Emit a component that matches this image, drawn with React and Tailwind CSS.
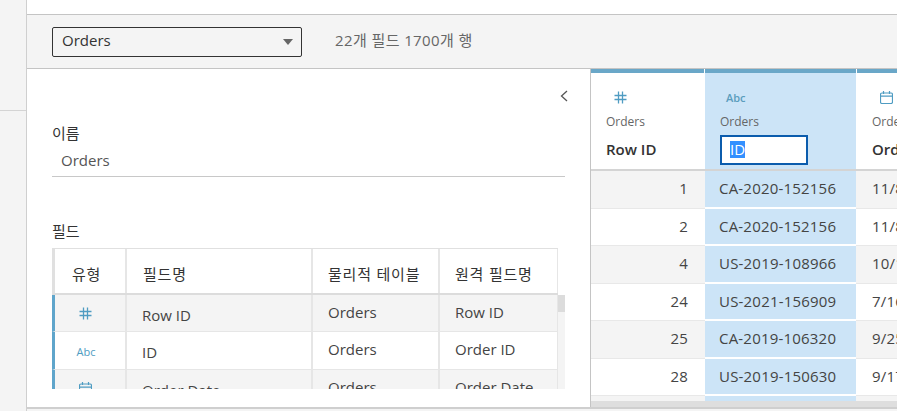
const FONT = "font-['Open_Sans','Noto_Sans_CJK_KR',sans-serif]";

function HashIcon({ className }) {
  return (
    <svg width="13" height="13" viewBox="0 0 13 13" className={className} fill="none" stroke="#4f9cc2" strokeWidth="1.3">
      <path d="M0.5 4.5H12.5M0.5 8.5H12.5M4.5 0.5V12.5M8.5 0.5V12.5" />
    </svg>
  );
}

function CalendarIcon({ className }) {
  return (
    <svg width="13" height="13" viewBox="0 0 13 13" className={className} fill="none" stroke="#4f9cc2" strokeWidth="1.2">
      <rect x="0.5" y="2" width="12" height="10.5" rx="1.5" />
      <path d="M0.5 5.2H12.5M3.5 0V3M9.5 0V3" />
    </svg>
  );
}

const fieldRows = [
  { icon: "hash", name: "Row ID", table: "Orders", remote: "Row ID", shade: true, h: "h-[37px]" },
  { icon: "abc", name: "ID", table: "Orders", remote: "Order ID", shade: false, h: "h-[38px]" },
  { icon: "cal", name: "Order Date", table: "Orders", remote: "Order Date", shade: true, h: "h-[38px]" },
];

const gridRows = [
  { id: "1", order: "CA-2020-152156", date: "11/8/2020" },
  { id: "2", order: "CA-2020-152156", date: "11/8/2020" },
  { id: "4", order: "US-2019-108966", date: "10/11/2019" },
  { id: "24", order: "US-2021-156909", date: "7/16/2021" },
  { id: "25", order: "CA-2019-106320", date: "9/25/2019" },
  { id: "28", order: "US-2019-150630", date: "9/17/2019" },
  { id: "", order: "", date: "" },
];

function FieldsTable() {
  return (
    <div className="flex mt-[7px] h-[141px] overflow-hidden">
      <div className="w-[506px] shrink-0">
        <div className="flex h-[47px] border-t border-[#e0e0e0] border-b-2 border-b-[#dcdcdc] border-l-[3px] border-l-[#e0e0e0] text-[15px] tracking-[0.8px] text-[#333]">
          <div className="w-[72px] shrink-0 border-r-2 border-[#e6e6e6] pl-[17px] pt-[14px]">유형</div>
          <div className="w-[186px] shrink-0 border-r-2 border-[#e6e6e6] pl-[16px] pt-[14px]">필드명</div>
          <div className="w-[127px] shrink-0 border-r-2 border-[#e6e6e6] pl-[15px] pt-[14px]">물리적 테이블</div>
          <div className="w-[118px] shrink-0 border-r border-[#e6e6e6] pl-[15px] pt-[14px]">원격 필드명</div>
        </div>
        {fieldRows.map((r) => (
          <div
            key={r.name}
            className={`flex ${r.h} border-l-[3px] border-l-[#5fa5cb] border-b border-b-[#e6e6e6] text-[15px] text-[#444] ${r.shade ? "bg-[#f4f4f4]" : "bg-white"}`}
          >
            <div className="w-[72px] shrink-0 border-r-2 border-[#e6e6e6] flex items-center justify-center pr-[10px]">
              {r.icon === "hash" && <HashIcon />}
              {r.icon === "abc" && <span className="text-[11px] text-[#4f9cc2] pl-[2px] pt-[3px]">Abc</span>}
              {r.icon === "cal" && <CalendarIcon />}
            </div>
            <div className="w-[186px] shrink-0 border-r-2 border-[#e6e6e6] pl-[15px] pt-[9px]">{r.name}</div>
            <div className="w-[127px] shrink-0 border-r-2 border-[#e6e6e6] pl-[15px] pt-[6px]">{r.table}</div>
            <div className="w-[118px] shrink-0 border-r border-[#e6e6e6] pl-[15px] pt-[6px] whitespace-nowrap">{r.remote}</div>
          </div>
        ))}
      </div>
      <div className="w-[7px] mt-[47px] bg-[#f4f4f4]">
        <div className="h-[17px] bg-[#dcdcdc]" />
      </div>
    </div>
  );
}

function DataGrid() {
  return (
    <div className="flex-1 min-w-0 overflow-hidden border-l border-[#c4c4c4] bg-white flex flex-col">
      <div className="flex h-[102px] shrink-0 border-b-2 border-[#d4d4d4]">
        <div className="w-[113px] shrink-0 border-t-[4px] border-[#6aa7c8] pl-[15px] text-[12px] text-[#666]">
          <HashIcon className="ml-[8px] mt-[18px]" />
          <div className="mt-[9px] leading-[18px]">Orders</div>
          <div className="mt-[8px] text-[15px] font-semibold text-[#333] leading-[20px]">Row ID</div>
        </div>
        <div className="w-[151px] shrink-0 ml-[1px] border-t-[4px] border-[#6aa7c8] bg-[#cce4f7] pl-[15px] text-[12px] text-[#666]">
          <div className="text-[11px] font-semibold text-[#5b9dbd] ml-[6px] mt-[15px] leading-[20px]">Abc</div>
          <div className="mt-[5px] leading-[18px]">Orders</div>
          <div className="mt-[4px] w-[88px] h-[30px] border-[2px] border-[#0b5cad] bg-white pl-[8px] pb-[2px] flex items-center text-[15px] text-[#333]">
            <span className="bg-[#3390ff] text-white leading-[17px]">ID</span>
          </div>
        </div>
        <div className="flex-1 ml-[1px] border-t-[4px] border-[#6aa7c8] pl-[15px] text-[12px] text-[#666] whitespace-nowrap overflow-hidden">
          <CalendarIcon className="ml-[8px] mt-[18px]" />
          <div className="mt-[9px] leading-[18px]">Orders</div>
          <div className="mt-[8px] text-[15px] font-semibold text-[#333] leading-[20px]">Order Date</div>
        </div>
      </div>
      <div className="h-[230px] overflow-hidden shrink-0">
        {gridRows.map((r, i) => (
          <div key={i} className={`flex h-[37.5px] text-[15px] tracking-[0.2px] text-[#444] border-b border-[#e8e8e8] ${i % 2 === 0 ? "bg-[#f4f4f4]" : "bg-white"}`}>
            <div className="w-[113px] shrink-0 text-right pr-[16px] pt-[6px]">{r.id}</div>
            <div className="w-[151px] shrink-0 ml-[1px] bg-[#cce4f7] border-b-2 border-white -mb-px pl-[14px] pt-[6px]">{r.order}</div>
            <div className="flex-1 ml-[1px] pl-[15px] pt-[6px] whitespace-nowrap overflow-hidden">{r.date}</div>
          </div>
        ))}
      </div>
      <div className="flex-1 bg-[#dedede]" />
    </div>
  );
}

export default function App() {
  return (
    <div className={`${FONT} w-[897px] h-[411px] overflow-hidden flex bg-[#f4f4f4]`}>
      <div className="w-[27px] shrink-0 border-r border-[#cfcfcf]">
        <div className="h-[111px] border-b border-[#d4d4d4] bg-[#f4f4f4]" />
      </div>
      <div className="flex-1 min-w-0 flex flex-col">
        <div className="h-[15px] shrink-0 bg-white border-b border-[#c4c4c4]" />
        <div className="h-[54px] shrink-0 bg-[#f4f4f4] border-b border-[#c4c4c4] flex items-center pl-[25px]">
          <div className="w-[250px] h-[30px] border border-[#333] rounded-[2px] flex items-center justify-between pl-[9px] pr-[7px] text-[15px] text-[#333]">
            <span className="-mt-[2px]">Orders</span>
            <span className="w-0 h-0 border-x-[5px] border-x-transparent border-t-[6px] border-t-[#666] mr-px" />
          </div>
          <span className="ml-[33px] -mt-[2px] text-[15px] tracking-[0.4px] text-[#666]">22개 필드 1700개 행</span>
        </div>
        <div className="h-[340px] shrink-0 flex border-b-2 border-[#cfcfcf]">
          <div className="w-[563px] shrink-0 bg-white pl-[25px] pr-[25px] relative">
            <svg width="8" height="12" viewBox="0 0 8 12" fill="none" stroke="#555" strokeWidth="1.3" className="absolute left-[533px] top-[21px]">
              <path d="M7 1L1.5 6L7 11" />
            </svg>
            <div className="pt-[54px] text-[15px] text-[#333] leading-[20px]">이름</div>
            <div className="mt-[7px] h-[27px] pl-[9px] border-b border-[#c8c8c8] text-[15px] text-[#555] leading-[20px]">Orders</div>
            <div className="mt-[44px] text-[15px] text-[#333] leading-[20px]">필드</div>
            <FieldsTable />
          </div>
          <DataGrid />
        </div>
      </div>
    </div>
  );
}
